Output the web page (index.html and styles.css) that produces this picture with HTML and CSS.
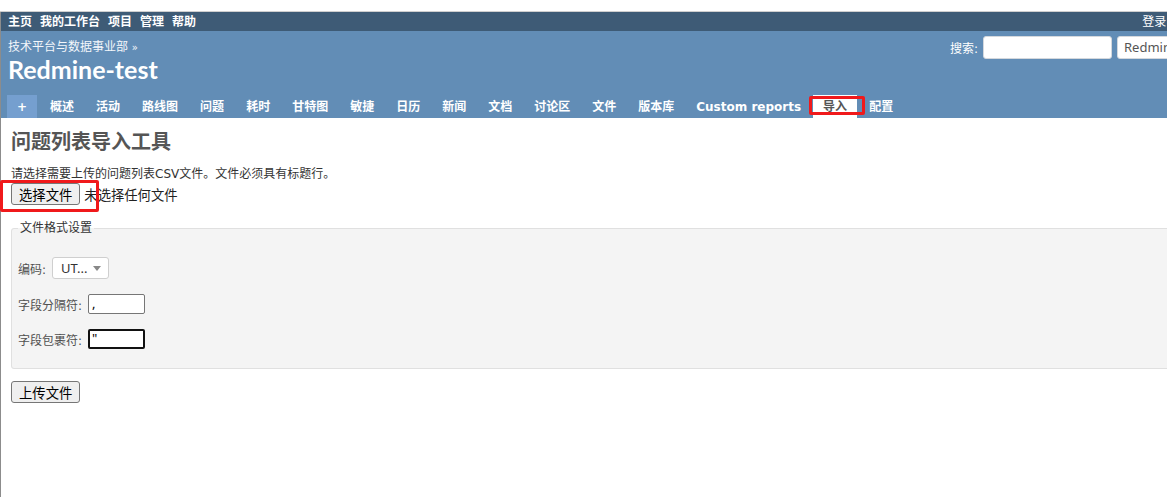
FILE: index.html
```html
<!DOCTYPE html>
<html lang="zh-CN">
<head>
<meta charset="utf-8">
<title>问题列表导入工具 - Redmine-test</title>
<link rel="stylesheet" href="styles.css">
</head>
<body>
<div class="screen">
  <div class="chrome"></div>
  <div class="viewport">
    <div class="page">
      <div class="top-menu">
        <ul class="top-links">
          <li>主页</li>
          <li>我的工作台</li>
          <li>项目</li>
          <li>管理</li>
          <li>帮助</li>
        </ul>
        <div class="account">登录 注册</div>
      </div>
      <div class="header">
        <div class="header-row">
          <div class="titles">
            <div class="breadcrumb">技术平台与数据事业部 <span class="raquo">»</span></div>
            <h1>Redmine-test</h1>
          </div>
          <div class="quick-search">
            <span class="qs-label">搜索:</span>
            <span class="qs-input"></span>
            <span class="qs-select">Redmine-test</span>
          </div>
        </div>
        <ul class="main-menu">
          <li class="tab new">+</li>
          <li class="tab">概述</li>
          <li class="tab">活动</li>
          <li class="tab">路线图</li>
          <li class="tab">问题</li>
          <li class="tab">耗时</li>
          <li class="tab">甘特图</li>
          <li class="tab">敏捷</li>
          <li class="tab">日历</li>
          <li class="tab">新闻</li>
          <li class="tab">文档</li>
          <li class="tab">讨论区</li>
          <li class="tab">文件</li>
          <li class="tab">版本库</li>
          <li class="tab">Custom reports</li>
          <li class="tab selected">导入</li>
          <li class="tab">配置</li>
        </ul>
      </div>
      <div class="content">
        <h2>问题列表导入工具</h2>
        <p class="intro">请选择需要上传的问题列表CSV文件。文件必须具有标题行。</p>
        <div class="file-row">
          <span class="btn">选择文件</span>
          <span class="no-file">未选择任何文件</span>
        </div>
        <fieldset class="box">
          <legend>文件格式设置</legend>
          <div class="frow first">
            <span class="flabel">编码:</span>
            <span class="fsel"><span class="fsel-text">UT...</span><span class="caret"></span></span>
          </div>
          <div class="frow second">
            <span class="flabel">字段分隔符:</span>
            <span class="finput">,</span>
          </div>
          <div class="frow third">
            <span class="flabel">字段包裹符:</span>
            <span class="finput focused">"</span>
          </div>
        </fieldset>
        <div class="submit-row">
          <span class="btn">上传文件</span>
        </div>
      </div>
    </div>
  </div>
  <div class="mark mark-import"></div>
  <div class="mark mark-file"></div>
</div>
</body>
</html>
```

FILE: styles.css
```css
html, body {
  margin: 0;
  padding: 0;
  background: #fff;
  overflow: hidden;
}

.screen {
  position: relative;
  width: 1167px;
  height: 497px;
  overflow: hidden;
  font-family: "DejaVu Sans", "Noto Sans CJK SC", sans-serif;
  font-size: 12px;
  color: #333;
}

.chrome {
  height: 11px;
  background: #fff;
  border-bottom: 1px solid #cfcfcf;
}

.viewport {
  height: 485px;
  border-left: 1px solid #8c8c8c;
  overflow: hidden;
}

.page {
  width: 1200px;
}

/* top menu */
.top-menu {
  height: 19px;
  box-sizing: border-box;
  background: #3e5b76;
  color: #fff;
  font-weight: bold;
  display: flex;
  align-items: center;
  padding: 1px 5px 0 7px;
  line-height: 18px;
}

.top-links {
  list-style: none;
  margin: 0;
  padding: 0;
  display: flex;
  gap: 8px;
}

.account {
  margin-left: auto;
  font-weight: normal;
  word-spacing: 4px;
  margin-right: -2px;
}

/* header */
.header {
  height: 87px;
  background: #628db6;
  color: #fff;
  display: flex;
  flex-direction: column;
}

.header-row {
  display: flex;
  justify-content: space-between;
  align-items: flex-start;
  padding: 5px 8px 0 7px;
}

.titles {
  padding-top: 3px;
}

.breadcrumb {
  line-height: 16px;
  color: #f4f7fb;
}

.raquo {
  font-size: 10px;
}

.header h1 {
  margin: 0;
  font-family: "Lato", "DejaVu Sans", sans-serif;
  font-weight: bold;
  font-size: 25px;
  line-height: 26px;
  color: #fff;
}

.quick-search {
  display: flex;
  align-items: center;
  gap: 4px;
  height: 23px;
}

.qs-label {
  color: #fff;
  margin-right: 1px;
}

.qs-input {
  width: 129px;
  height: 23px;
  box-sizing: border-box;
  background: #fff;
  border: 1px solid #d4d8dd;
  border-radius: 3px;
}

.qs-select {
  width: 76px;
  height: 23px;
  box-sizing: border-box;
  margin-left: 1px;
  background: #fff;
  border: 1px solid #d4d8dd;
  border-radius: 3px;
  padding-left: 6px;
  font-family: "Noto Sans", sans-serif;
  font-size: 13px;
  line-height: 21px;
  color: #555;
  overflow: hidden;
  white-space: nowrap;
}

/* main menu */
.main-menu {
  margin: auto 0 0;
  padding: 0 0 0 6px;
  list-style: none;
  display: flex;
  height: 23px;
}

.tab {
  padding: 2px 10px 0;
  margin-right: 2px;
  line-height: 21px;
  font-weight: bold;
  color: #fff;
  white-space: nowrap;
}

.tab.new {
  background: #759fcf;
  margin-right: 3px;
}

.tab.selected {
  background: #fff;
  color: #555;
}

/* content */
.content {
  padding: 6px 10px 10px 10px;
}

.content h2 {
  margin: 5px 0 0;
  font-family: "Noto Sans CJK SC", sans-serif;
  font-size: 20px;
  line-height: 24px;
  font-weight: bold;
  color: #555;
}

.intro {
  margin: 13px 0 0;
  line-height: 16px;
}

.file-row {
  margin-top: 1px;
  display: flex;
  align-items: center;
  gap: 4px;
  height: 22px;
}

.btn {
  display: inline-flex;
  align-items: center;
  height: 22px;
  box-sizing: border-box;
  padding: 0 7px;
  border: 1px solid #767676;
  border-radius: 3px;
  background: #efefef;
  color: #000;
  font-family: "Noto Sans CJK SC", sans-serif;
  font-size: 13.33px;
}

.no-file {
  font-family: "Noto Sans CJK SC", sans-serif;
  font-size: 13.33px;
  color: #222;
}

.box {
  margin: 15px 0 0;
  padding: 0 6px 18px;
  border: 1px solid #e0e0e0;
  border-radius: 3px;
  background: #f4f4f4;
}

.box legend {
  padding: 0 2px;
  line-height: 16px;
  color: #333;
}

.frow {
  display: flex;
  align-items: center;
  gap: 6px;
  height: 22px;
  color: #505050;
}

.frow.first { margin-top: 21px; }
.frow.second { margin-top: 14px; }
.frow.third { margin-top: 13px; }

.fsel {
  display: flex;
  align-items: center;
  width: 57px;
  height: 22px;
  box-sizing: border-box;
  padding: 0 7px 0 8px;
  background: #fff;
  border: 1px solid #cfcfcf;
  border-radius: 3px;
  font-family: "Noto Sans", sans-serif;
  font-size: 13px;
  color: #333;
}

.caret {
  margin-left: auto;
  width: 0;
  height: 0;
  border-left: 4px solid transparent;
  border-right: 4px solid transparent;
  border-top: 5px solid #888;
}

.finput {
  width: 57px;
  height: 20px;
  box-sizing: border-box;
  padding-left: 3px;
  background: #fff;
  border: 1px solid #767676;
  border-radius: 2px;
  font-family: "Noto Sans", sans-serif;
  font-size: 13px;
  line-height: 16px;
  color: #000;
}

.finput.focused {
  border: 2px solid #111;
  padding-left: 2px;
  line-height: 14px;
}

.submit-row {
  margin-top: 12px;
}

/* red annotation boxes drawn over the screenshot */
.mark {
  position: absolute;
  box-sizing: border-box;
  border: 3px solid #f0191b;
  border-radius: 2px;
}

.mark-import {
  left: 809px;
  top: 96px;
  width: 56px;
  height: 19px;
}

.mark-file {
  left: 0;
  top: 180px;
  width: 99px;
  height: 32px;
}
```
